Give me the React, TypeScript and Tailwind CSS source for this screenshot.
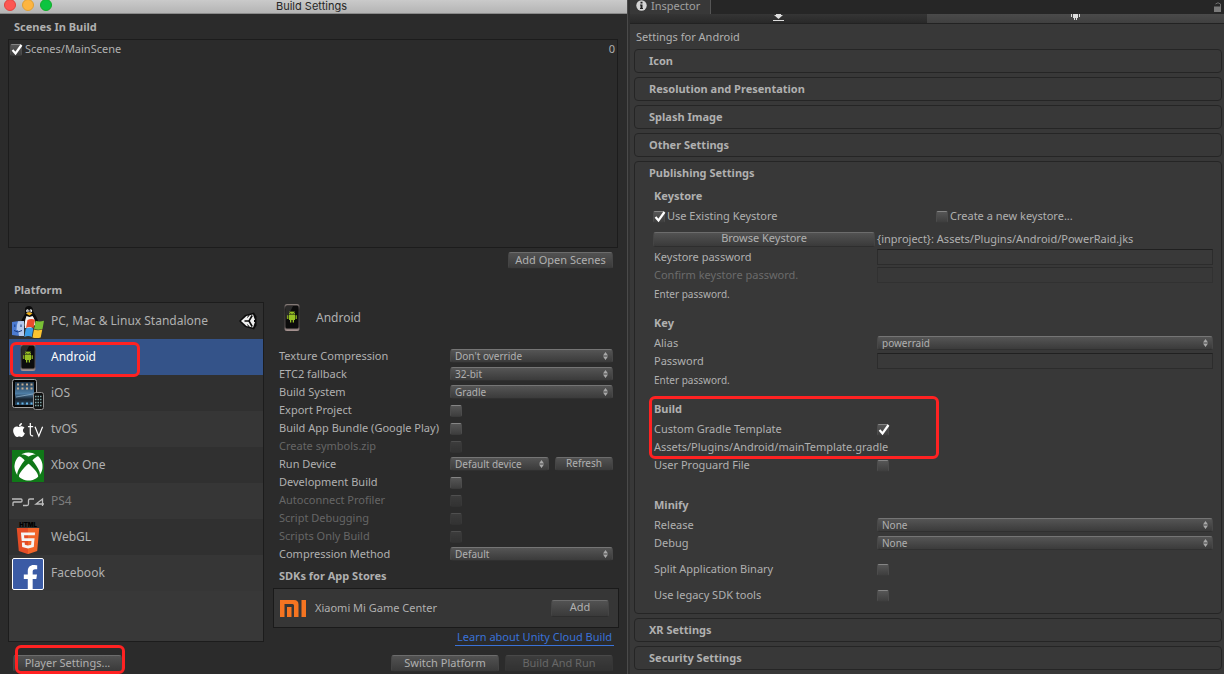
import type { ReactNode } from 'react';
import { useId } from 'react';
import clsx from 'clsx';
import { FaApple, FaFacebookF, FaHtml5, FaXbox } from 'react-icons/fa';

/* Icons */
const AndroidIcon = () => (
  <svg width="32" height="32" viewBox="0 0 32 32">
    <defs>
      <linearGradient id="phone" x1="0" y1="0" x2="0" y2="1">
        <stop offset="0" stopColor="#8a7f7c" />
        <stop offset="0.2" stopColor="#3c3838" />
        <stop offset="0.85" stopColor="#5a5251" />
        <stop offset="1" stopColor="#b09b98" />
      </linearGradient>
    </defs>
    <rect x="8.500" y="2" width="15" height="27" rx="2.500" fill="url(#phone)" />
    <rect x="9.500" y="3.500" width="13" height="23" rx="1.500" fill="#0c0c0c" />
    <path d="M10 4h7l-7 14z" fill="#2b2b2b" />
    <g fill="#97c024">
      <path d="M13 12.600a3 3 0 0 1 6 0z" />
      <path d="M13 13h6v5h-6z" />
      <path d="M11.200 13.200h1.200v3.800h-1.200zM19.600 13.200h1.200v3.800h-1.200zM14 18h1.300v2.400H14zM16.700 18H18v2.400h-1.300z" />
      <path d="M13.600 9l1 1.600M18.400 9l-1 1.600" stroke="#97c024" strokeWidth="0.600" />
    </g>
    <path d="M14.400 11h.8v.8h-.8zM16.800 11h.8v.8h-.8z" fill="#0c0c0c" />
  </svg>
);

const StandaloneIcon = () => (
  <svg width="32" height="32" viewBox="0 0 32 32">
    {/* Penguin */}
    <path
      d="M13 3c0-2 2-3 4-3s4 1.500 4 4c0 3 4 6 5 11l-3 6H10l-1-5c1-4 4-7 4-9z"
      fill="#0b0b0b"
    />
    <path d="M14.500 10l3 1 3-1c2 3 3 5 2.500 9L19 22h-6c-1-4 0-8 1.500-12z" fill="#f4f4f4" />
    <ellipse cx="15.500" cy="4.800" rx="1.300" ry="1.600" fill="#fff" />
    <ellipse cx="18.800" cy="4.800" rx="1.300" ry="1.600" fill="#fff" />
    <circle cx="15.800" cy="5" r="0.600" />
    <circle cx="18.500" cy="5" r="0.600" />
    <path d="M14 7.500l3-1.500 3.500 1.500-3 2z" fill="#f2b21b" />
    {/* Finder face */}
    <path d="M0 16q5-1 11-1v15q-6 0-11-1z" fill="#4c7bd0" />
    <path d="M6 15.300q2.500-.3 6-.3v15H7l-1-6H4.500q0-5 1.500-8.700z" fill="#b4c9ee" />
    <path d="M2.800 18.500v2.500M9 18.500v2.500M2 24.500q4 3 8 0" stroke="#173a80" fill="none" />
    {/* Flag */}
    <path d="M15.500 14q4-2 7.500 0l-1.500 8q-3.500-2-7.500 0z" fill="#ea4b2c" />
    <path d="M23.600 14.800q4 1.500 8.400 0L30.500 23q-4 1.500-8.400 0z" fill="#79bf35" />
    <path d="M13.800 22.600q4-2 7.500 0L19.800 31q-3.500-2-7.500 0z" fill="#3b9de8" />
    <path d="M21.900 23.600q4 1.500 8.400 0L28.700 31.500q-4 1.500-8.200 0z" fill="#fbc430" />
  </svg>
);

const IosIcon = () => (
  <svg width="32" height="32" viewBox="0 0 32 32">
    <defs>
      <linearGradient id="pad" x1="0" y1="0" x2="0" y2="1">
        <stop offset="0" stopColor="#1d3346" />
        <stop offset="0.500" stopColor="#4d7da5" />
        <stop offset="0.750" stopColor="#16222e" />
        <stop offset="1" stopColor="#2d4961" />
      </linearGradient>
    </defs>
    <rect x="0.500" y="1.500" width="24" height="28" rx="2" fill="#060606" stroke="#a3a3a3" />
    <rect x="3" y="4" width="19" height="23" fill="url(#pad)" />
    <path d="M5 6.500h16M5 10.500h16" stroke="#c5ae94" strokeWidth="2" strokeDasharray="2 2.500" />
    <path d="M4 19l17-3" stroke="#8bafc9" strokeWidth="0.800" />
    <path d="M5 25.500h16" stroke="#63b4e9" strokeWidth="2" strokeDasharray="2 2.500" />
    <rect x="21.500" y="14.500" width="10" height="17" rx="2" fill="#101010" stroke="#8f8f8f" />
    <path
      d="M23 18.500h7M23 21.500h7M23 24.500h7M23 27.500h7"
      stroke="#7ba3a5"
      strokeWidth="1.500"
      strokeDasharray="1.500 1"
    />
  </svg>
);

const AppleTvIcon = () => (
  <span className="flex h-8 w-8 items-center overflow-hidden text-white">
    <FaApple size={16} className="-ml-px shrink-0" />
    <svg width="18" height="18" viewBox="0 0 18 18" fill="none" stroke="#fff" strokeWidth="1.300">
      <path d="M3.500 1.500v11q0 3 3 2.700M1 5.500h5.500M8.500 5.500l4 10 4-10" />
    </svg>
  </span>
);

const XboxIcon = () => (
  <span className="flex h-8 w-8 items-center justify-center bg-[#107818] text-white">
    <FaXbox size={29} />
  </span>
);

const Ps4Icon = () => (
  <svg width="32" height="32" viewBox="0 0 32 32" fill="none" stroke="#bdbdbd" strokeWidth="1.300">
    <path d="M0 13h9q1 0 1 1v1q0 1-1 1H2q-1 0-1 1v3" />
    <path d="M11 19.500h4q1.500 0 1.500-1.500v-3.500q0-1.500 1.500-1.500h4" />
    <path d="M30.500 20v-7l-6.500 5h8" />
  </svg>
);

const WebGlIcon = () => (
  <svg width="32" height="32" viewBox="0 0 32 32">
    <defs>
      <linearGradient id="shield">
        <stop offset="0.500" stopColor="#e44d26" />
        <stop offset="0.500" stopColor="#f16529" />
      </linearGradient>
    </defs>
    <text
      x="16"
      y="5"
      textAnchor="middle"
      fontSize="6"
      fontWeight="900"
      fontFamily="Inter, sans-serif"
      fill="#000"
    >
      HTML
    </text>
    <path d="M8 9h16l-2 18-6 2-6-2z" fill="#f4f4f4" />
    <FaHtml5 x="1" y="4" size={30} fill="url(#shield)" />
  </svg>
);

const FacebookIcon = () => (
  <span className="flex h-8 w-8 items-end justify-end overflow-hidden rounded-xs border border-white bg-[#3b5ba5] pr-1 text-white">
    <FaFacebookF size={25} className="translate-x-1 translate-y-px" />
  </span>
);

const UnityIcon = () => (
  <svg width="18" height="18" viewBox="0 0 18 18">
    <path d="M0 9l6-6 9-2.500 2.500 4v9L15 17.500 6 15z" fill="#0c0c0c" />
    <path d="M2 9l5.500-5L14 2.500l1.800 5V10.500l-1.800 5L7.500 14z" fill="#f0f0f0" />
    <path d="M5.500 9H10l3.200-5.500M10 9l3.200 5.500" stroke="#0c0c0c" strokeWidth="1.600" fill="none" />
    <path d="M10.500 2.500L8.500 5.500M10.500 15.500l-2-3M16.500 7.500l-1.500 1.500 1.500 1.500" stroke="#0c0c0c" fill="none" />
  </svg>
);

const MiIcon = () => (
  <svg width="26" height="17" viewBox="0 0 26 17" fill="#f57421">
    <path d="M0 0h14q4.500 0 4.500 4.500V17H14V5.500Q14 4 12.500 4h-8v13H0z" />
    <path d="M7 7h4.500v10H7zM21.500 0H26v17h-4.500z" />
  </svg>
);
/* End Icons */

/* Controls */
type ButtonProps = { children: ReactNode; className?: string; disabled?: boolean };

const Button = ({ children, className, disabled }: ButtonProps) => (
  <button
    type="button"
    disabled={disabled}
    className={clsx(
      'flex items-center justify-center rounded-[3px] border border-[#454545] border-t-[#6c6c6c] border-b-[#2e2e2e] bg-linear-to-b from-[#525252] to-[#3a3a3a] pb-0.5 whitespace-nowrap disabled:opacity-45',
      className,
    )}
  >
    {children}
  </button>
);

const Check = ({ id, checked, disabled }: { id: string; checked?: boolean; disabled?: boolean }) => (
  <span className="relative mt-0.5 flex h-3 w-3 shrink-0">
    <input
      id={id}
      type="checkbox"
      defaultChecked={checked}
      disabled={disabled}
      className="peer h-3 w-3 appearance-none rounded-[2px] border border-[#4c4c4c] border-t-[#858585] border-b-[#3a3a3a] bg-linear-to-b from-[#565656] to-[#3e3e3e] disabled:opacity-40"
    />
    <svg
      viewBox="0 0 12 12"
      className="pointer-events-none absolute inset-0 hidden h-3 w-3 overflow-visible peer-checked:block"
      fill="none"
      stroke="#fff"
      strokeWidth="2.200"
    >
      <path d="M2.500 6l3 3.500 6-8.500" />
    </svg>
  </span>
);

const Select = ({ id, value, className }: { id: string; value: string; className?: string }) => (
  <span className={clsx('relative flex h-[14px]', className)}>
    <select
      id={id}
      className="h-[14px] w-full appearance-none rounded-[3px] border border-[#484848] border-t-[#757575] border-b-[#303030] bg-linear-to-b from-[#555555] to-[#3b3b3b] pr-4 pl-1 text-[10px] leading-[12px] outline-none"
    >
      <option>{value}</option>
    </select>
    <svg
      width="5"
      height="8"
      viewBox="0 0 5 8"
      fill="#a8a8a8"
      className="pointer-events-none absolute top-[3px] right-[5px]"
    >
      <path d="M2.500 0L5 3.500H0zM2.500 8L0 4.500h5z" />
    </svg>
  </span>
);

const PasswordField = ({ id, disabled }: { id: string; disabled?: boolean }) => (
  <input
    id={id}
    type="password"
    disabled={disabled}
    className="h-4 w-full border border-[#2c2c2c] border-t-[#202020] bg-[#393939] px-1 outline-none disabled:opacity-50"
  />
);
/* End Controls */

/* Build Settings */
const platforms = [
  { name: 'PC, Mac & Linux Standalone', icon: <StandaloneIcon />, current: true },
  { name: 'Android', icon: <AndroidIcon />, selected: true },
  { name: 'iOS', icon: <IosIcon /> },
  { name: 'tvOS', icon: <AppleTvIcon /> },
  { name: 'Xbox One', icon: <XboxIcon /> },
  { name: 'PS4', icon: <Ps4Icon />, unavailable: true },
  { name: 'WebGL', icon: <WebGlIcon /> },
  { name: 'Facebook', icon: <FacebookIcon /> },
];

type Option = {
  label: string;
  value?: string;
  disabled?: boolean;
  refresh?: boolean;
};

const options: Option[] = [
  { label: 'Texture Compression', value: "Don't override" },
  { label: 'ETC2 fallback', value: '32-bit' },
  { label: 'Build System', value: 'Gradle' },
  { label: 'Export Project' },
  { label: 'Build App Bundle (Google Play)' },
  { label: 'Create symbols.zip', disabled: true },
  { label: 'Run Device', value: 'Default device', refresh: true },
  { label: 'Development Build' },
  { label: 'Autoconnect Profiler', disabled: true },
  { label: 'Script Debugging', disabled: true },
  { label: 'Scripts Only Build', disabled: true },
  { label: 'Compression Method', value: 'Default' },
];

const OptionRow = ({ label, value, disabled, refresh }: Option) => {
  const id = useId();
  return (
    <div className="flex h-[18px] items-center">
      <label
        htmlFor={id}
        className={clsx('w-[171px] shrink-0 whitespace-nowrap', disabled && 'text-[#666666]')}
      >
        {label}
      </label>
      {value ? (
        <Select id={id} value={value} className="flex-1" />
      ) : (
        <Check id={id} disabled={disabled} />
      )}
      {refresh && <Button className="ml-1.5 h-[14px] w-[58px] text-[10px]">Refresh</Button>}
    </div>
  );
};

const BuildSettings = () => (
  <section className="flex flex-col border-r border-[#4a4a4a] bg-[#2b2b2b]">
    <header className="relative flex h-[14px] items-start justify-center overflow-hidden border-b border-[#8a8a8a] bg-linear-to-b from-[#cacaca] to-[#b4b4b4]">
      <div className="absolute -top-px left-1 flex gap-1.5">
        <span className="h-3 w-3 rounded-full border border-[#e0443e] bg-[#fc5753]" />
        <span className="h-3 w-3 rounded-full border border-[#de9f34] bg-[#fdb541]" />
        <span className="h-3 w-3 rounded-full border border-[#12ac28] bg-[#0cc440]" />
      </div>
      <h1 className="pr-1 font-['Inter','Liberation_Sans',sans-serif] text-[11px] leading-3 text-[#262626]">
        Build Settings
      </h1>
    </header>

    {/* Scenes */}
    <h2 className="flex h-[25px] items-center px-3.5 font-bold">Scenes In Build</h2>
    <div className="mr-[9px] ml-2 h-[209px] border border-[#1c1c1c] pt-px pr-0.5 pl-px">
      <div className="flex h-4 items-center gap-[3px]">
        <Check id="main-scene" checked />
        <label htmlFor="main-scene" className="flex-1">
          Scenes/MainScene
        </label>
        <span>0</span>
      </div>
    </div>
    <div className="mt-1 flex justify-end pr-3.5">
      <Button className="h-[17px] w-[105px]">Add Open Scenes</Button>
    </div>
    {/* End Scenes */}

    <h2 className="mt-[9px] flex h-6 items-center px-3.5 font-bold">Platform</h2>
    <div className="flex pr-2 pl-2">
      {/* Platform List */}
      <ul className="h-[340px] w-[256px] shrink-0 border border-[#1c1c1c] bg-[#383838] text-xs">
        {platforms.map((platform) => (
          <li
            key={platform.name}
            className={clsx(
              'relative flex h-9 items-center gap-[7px] pr-1.5 pl-[3px]',
              platform.selected
                ? 'bg-[#345389] text-white'
                : 'odd:bg-[#303030] even:bg-[#363636]',
              platform.unavailable && 'text-[#7c7c7c]',
            )}
          >
            <span className="pt-0.5">{platform.icon}</span>
            <button type="button" className="flex-1 text-left">
              {platform.name}
            </button>
            {platform.current && <UnityIcon />}
            {platform.selected && (
              <span className="pointer-events-none absolute top-[3px] left-px z-10 h-[35px] w-[130px] rounded-md border-3 border-[#ff2222]" />
            )}
          </li>
        ))}
      </ul>
      {/* End Platform List */}

      {/* Platform Options */}
      <div className="ml-[9px] flex min-w-0 flex-1 flex-col">
        <div className="flex h-[45px] items-start gap-2 pl-[3px] text-xs">
          <AndroidIcon />
          <span className="leading-8">Android</span>
        </div>
        <div className="flex flex-col pr-1.5 pl-1.5">
          {options.map((option) => (
            <OptionRow key={option.label} {...option} />
          ))}
          <h3 className="flex h-[25px] items-center font-bold">SDKs for App Stores</h3>
        </div>
        <div className="flex h-10 items-center border border-[#1a1a1a] bg-[#363636] pr-[9px] pl-1.5">
          <MiIcon />
          <span className="flex-1 pl-[9px]">Xiaomi Mi Game Center</span>
          <Button className="h-[17px] w-[58px]">Add</Button>
        </div>
        <a
          href="#"
          className="mt-px mr-[5px] self-end border-b border-[#3a72d8] px-0.5 leading-4 text-[#3a72d8]"
        >
          Learn about Unity Cloud Build
        </a>
      </div>
      {/* End Platform Options */}
    </div>

    <footer className="mt-[9px] flex gap-1.5 pr-3.5 pl-[13px]">
      <div className="relative mr-auto">
        <Button className="h-[17px] w-[109px]">Player Settings...</Button>
        <span className="pointer-events-none absolute -top-2.5 left-0.5 h-[29px] w-[110px] rounded-md border-3 border-[#ff2222]" />
      </div>
      <Button className="h-[17px] w-[108px]">Switch Platform</Button>
      <Button className="h-[17px] w-[108px]" disabled>
        Build And Run
      </Button>
    </footer>
  </section>
);
/* End Build Settings */

/* Inspector */
const Foldout = ({ title, children }: { title: string; children?: ReactNode }) => (
  <section className="rounded-[4px] border border-[#252525]">
    <h2 className="flex h-[22px] items-center px-3.5 font-bold">{title}</h2>
    {children}
  </section>
);

const GroupTitle = ({ children, className }: { children: ReactNode; className?: string }) => (
  <h3 className={clsx('mb-px flex h-5 items-center pl-px font-bold', className)}>{children}</h3>
);

type FieldProps = {
  label: string;
  className?: string;
  disabled?: boolean;
  render: (id: string) => ReactNode;
};

const Field = ({ label, className, disabled, render }: FieldProps) => {
  const id = useId();
  return (
    <div className={clsx('grid h-[18px] grid-cols-[2fr_3fr] items-center', className)}>
      <label
        htmlFor={id}
        className={clsx('pl-px whitespace-nowrap', disabled && 'text-[#6b6b6b]')}
      >
        {label}
      </label>
      {render(id)}
    </div>
  );
};

const Hint = () => <p className="flex h-5 items-center pl-px text-[10px]">Enter password.</p>;

const PublishingSettings = () => (
  <div className="pt-0.5 pr-2 pb-[9px] pl-[18px]">
    <GroupTitle>Keystore</GroupTitle>
    <div className="grid h-[18px] grid-cols-2 items-center gap-x-1.5">
      <div className="flex items-center gap-0.5">
        <Check id="existing-keystore" checked />
        <label htmlFor="existing-keystore">Use Existing Keystore</label>
      </div>
      <div className="flex items-center gap-0.5">
        <Check id="new-keystore" />
        <label htmlFor="new-keystore">Create a new keystore...</label>
      </div>
    </div>
    <div className="mt-[5px] grid h-[18px] grid-cols-[2fr_3fr] items-center">
      <Button className="mr-0.5 h-[15px]">Browse Keystore</Button>
      <span className="whitespace-nowrap">
        {'{inproject}: Assets/Plugins/Android/PowerRaid.jks'}
      </span>
    </div>
    <Field label="Keystore password" render={(id) => <PasswordField id={id} />} />
    <Field
      label="Confirm keystore password."
      disabled
      render={(id) => <PasswordField id={id} disabled />}
    />
    <Hint />

    <GroupTitle className="mt-[9px]">Key</GroupTitle>
    <Field label="Alias" render={(id) => <Select id={id} value="powerraid" />} />
    <Field label="Password" render={(id) => <PasswordField id={id} />} />
    <Hint />

    <div className="relative mt-[9px]">
      <GroupTitle>Build</GroupTitle>
      <Field label="Custom Gradle Template" render={(id) => <Check id={id} checked />} />
      <p className="flex h-[18px] items-center pl-px">
        Assets/Plugins/Android/mainTemplate.gradle
      </p>
      <span className="pointer-events-none absolute -top-[3px] -left-1 h-[63px] w-[290px] rounded-md border-3 border-[#ff2222]" />
    </div>
    <Field label="User Proguard File" render={(id) => <Check id={id} />} />

    <GroupTitle className="mt-[21px]">Minify</GroupTitle>
    <Field label="Release" render={(id) => <Select id={id} value="None" />} />
    <Field label="Debug" render={(id) => <Select id={id} value="None" />} />
    <Field label="Split Application Binary" className="mt-2" render={(id) => <Check id={id} />} />
    <Field label="Use legacy SDK tools" className="mt-2" render={(id) => <Check id={id} />} />
  </div>
);

const Inspector = () => (
  <section className="flex flex-col border-l-2 border-[#303030] bg-[#383838]">
    <header className="flex h-[14px] items-center justify-between bg-[#262626]">
      <div className="flex h-[14px] w-[81px] items-start gap-1 border-r border-[#555555] bg-[#383838] pl-1.5">
        <svg width="11" height="11" viewBox="0 0 11 11" className="shrink-0">
          <circle cx="5.500" cy="5.500" r="5.200" fill="#d5d5d5" />
          <path d="M4.500 1.800h2v1.700h-2zM4 4.500h2.500V8H7v1H4V8h.5V5.500H4z" fill="#222" />
        </svg>
        <h1 className="leading-3 text-[#a0a0a0]">Inspector</h1>
      </div>
      <svg width="8" height="10" viewBox="0 0 8 10" className="mr-0.5">
        <path d="M1.500 2Q4-.5 6.500 2v3" fill="none" stroke="#6e6e6e" />
        <path d="M0 4.500h7V10H0z" fill="#7a7a7a" />
      </svg>
    </header>

    {/* Target Tabs */}
    <div className="grid h-2.5 grid-cols-2 border-b border-[#222222]">
      <button
        type="button"
        aria-label="Standalone"
        className="flex items-start justify-center bg-linear-to-b from-[#353535] to-[#292929]"
      >
        <svg width="11" height="7" viewBox="0 0 11 7" fill="#dcdcdc">
          <path d="M3 0h5v1h2L5.500 5 1 1h2zM0 6h11v1H0z" />
        </svg>
      </button>
      <button
        type="button"
        aria-label="Android"
        className="flex items-start justify-center bg-linear-to-b from-[#4a4a4a] to-[#404040]"
      >
        <svg width="9" height="7" viewBox="0 0 9 7" fill="#dcdcdc">
          <path d="M2 0h5v4H6v2H5V4H4v2H3V4H2zM0 0h1v3H0zM8 0h1v3H8z" />
        </svg>
      </button>
    </div>
    {/* End Target Tabs */}

    <p className="flex h-[25px] items-center pl-1.5">Settings for Android</p>
    <div className="flex flex-col gap-1 pr-0.5 pl-1">
      <Foldout title="Icon" />
      <Foldout title="Resolution and Presentation" />
      <Foldout title="Splash Image" />
      <Foldout title="Other Settings" />
      <Foldout title="Publishing Settings">
        <PublishingSettings />
      </Foldout>
      <Foldout title="XR Settings" />
      <Foldout title="Security Settings" />
    </div>
  </section>
);
/* End Inspector */

const App = () => {
  return (
    <main className="grid min-h-screen grid-cols-[628fr_596fr] bg-[#2b2b2b] font-['Noto_Sans','Open_Sans',sans-serif] text-[11px] leading-4 text-[#b0b0b0]">
      <BuildSettings />
      <Inspector />
    </main>
  );
};

export default App;
